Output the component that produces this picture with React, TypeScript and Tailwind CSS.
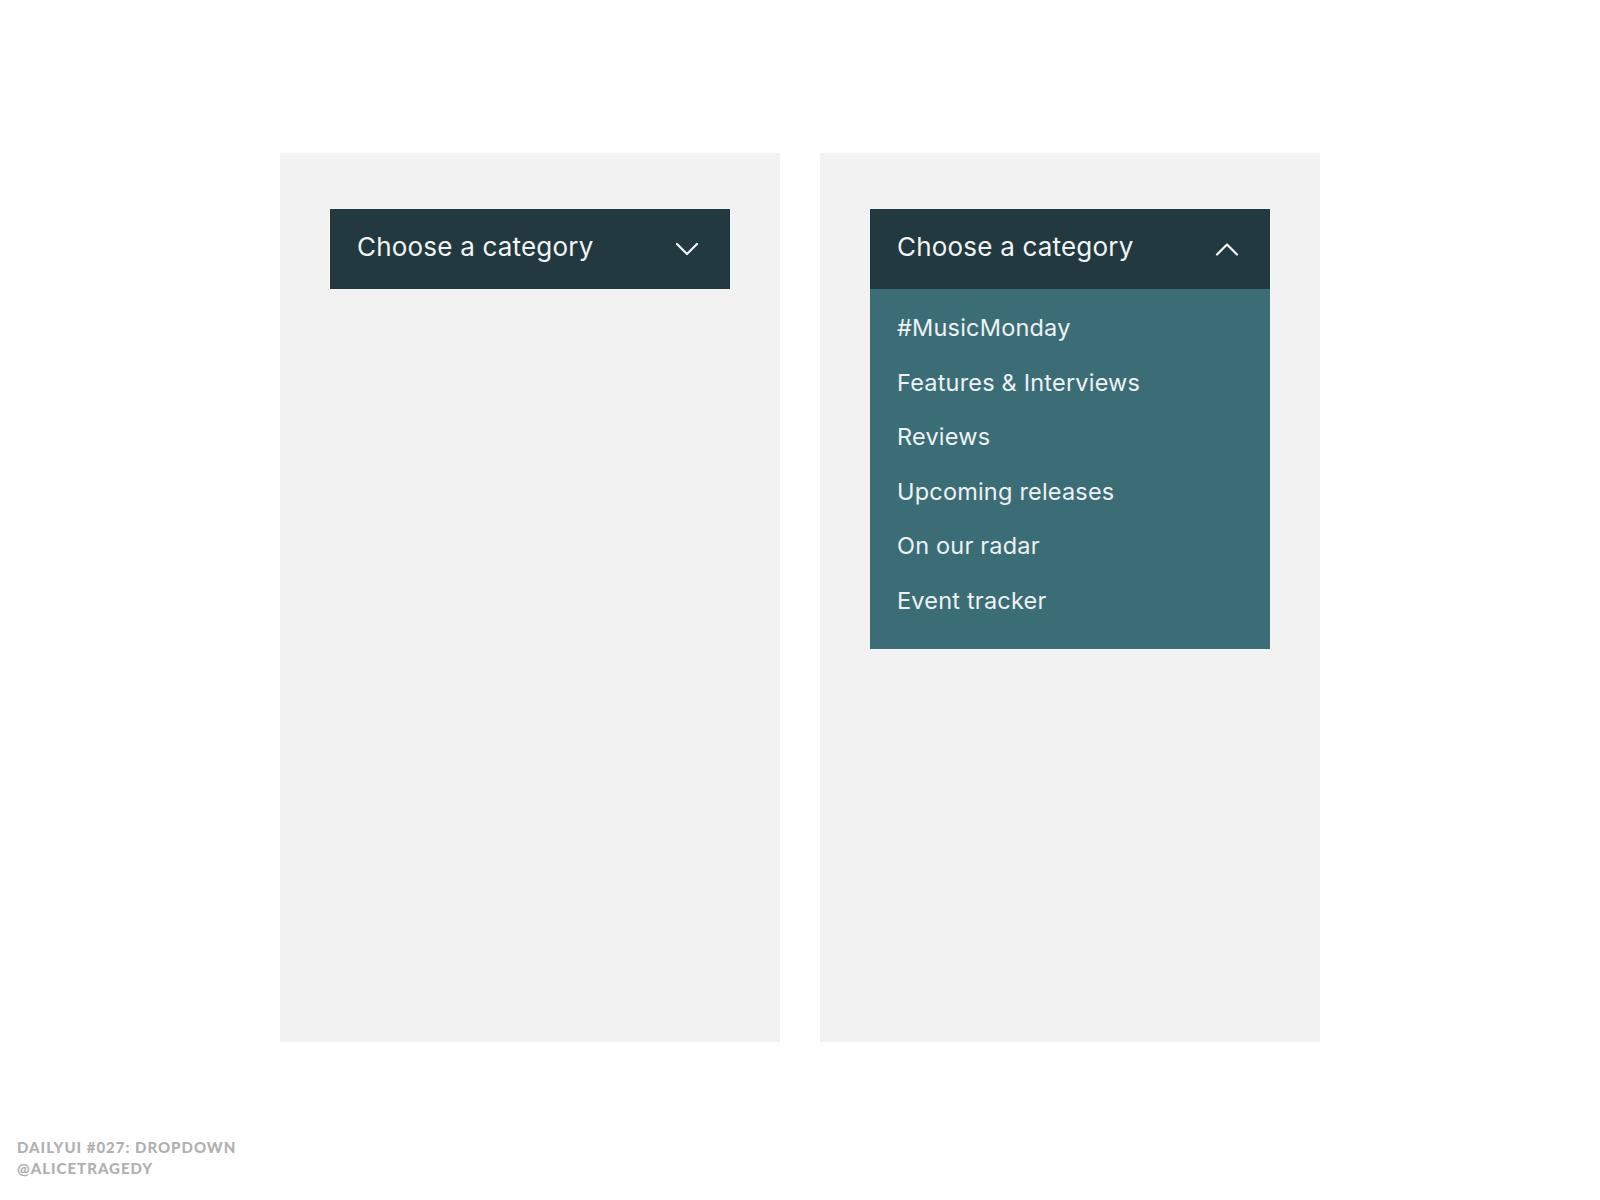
import { useState } from 'react';

const categories = [
  '#MusicMonday',
  'Features & Interviews',
  'Reviews',
  'Upcoming releases',
  'On our radar',
  'Event tracker',
];

function Chevron({ up }: { up: boolean }) {
  return (
    <svg width="24" height="14" viewBox="0 0 24 14" fill="none" className="shrink-0">
      <path
        d={up ? 'M2 12.5L12 2.5L22 12.5' : 'M2 2L12 12L22 2'}
        stroke="#f4f6f6"
        strokeWidth={2.2}
        strokeLinecap="round"
        strokeLinejoin="round"
      />
    </svg>
  );
}

function Dropdown({ initialOpen }: { initialOpen: boolean }) {
  const [open, setOpen] = useState(initialOpen);

  return (
    <div className="w-[400px]">
      <button
        onClick={() => setOpen(!open)}
        className="w-full h-[80px] bg-[#223a3f] flex items-center justify-between pl-[27px] pr-[31px] text-left"
      >
        <span className="text-[26px] text-[#f2f4f4] tracking-[0.2px] pb-[5px]">Choose a category</span>
        <Chevron up={open} />
      </button>
      {open && (
        <ul className="bg-[#3b6d77] pt-[12px] pb-[20px]">
          {categories.map(cat => (
            <li
              key={cat}
              className="pl-[27px] text-[23.5px] leading-[54.6px] text-[#eef2f3] tracking-[0.2px] cursor-pointer"
            >
              {cat}
            </li>
          ))}
        </ul>
      )}
    </div>
  );
}

export default function App() {
  return (
    <div className="w-full h-[1200px] bg-white font-['Inter',sans-serif] flex flex-col">
      <div className="flex justify-center gap-[40px] pt-[153px]">
        <div className="w-[500px] h-[889px] bg-[#f2f2f2] pt-[56px] pl-[50px]">
          <Dropdown initialOpen={false} />
        </div>
        <div className="w-[500px] h-[889px] bg-[#f2f2f2] pt-[56px] pl-[50px]">
          <Dropdown initialOpen={true} />
        </div>
      </div>
      <div className="mt-[95px] pl-[17px] font-['Lato',sans-serif] font-black text-[15px] leading-[21px] text-[#b0b0b0] tracking-[1px]">
        <p>DAILYUI #027: DROPDOWN</p>
        <p>@ALICETRAGEDY</p>
      </div>
    </div>
  );
}
